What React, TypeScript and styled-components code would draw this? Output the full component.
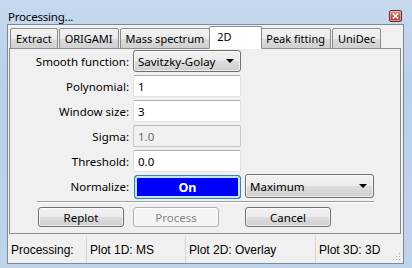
import styled, { createGlobalStyle } from "styled-components";

const GlobalStyle = createGlobalStyle`
  html, body {
    margin: 0;
    padding: 0;
    background: #bfd4eb;
  }
  * {
    box-sizing: border-box;
  }
`;

const uiFont = `"Noto Sans", "Open Sans", sans-serif`;

const Window = styled.div`
  width: 412px;
  height: 268px;
  display: flex;
  flex-direction: column;
  background: linear-gradient(#c6d9ee, #bad0e9 30%, #bfd4eb);
  font-family: ${uiFont};
  font-size: 11px;
  color: #000;
`;

const TitleBar = styled.div`
  height: 24px;
  padding: 8px 10px 0 8px;
  display: flex;
  align-items: center;
  justify-content: space-between;
`;

const Title = styled.span`
  font-size: 11.5px;
  letter-spacing: -0.2px;
`;

const CloseButton = styled.span`
  width: 13px;
  height: 12px;
  border: 1px solid #6b2a2a;
  border-radius: 2px;
  background: linear-gradient(#e39a8c, #c75050 50%, #b83c3c);
  box-shadow: inset 0 0 0 1px rgba(255, 220, 210, 0.5);
  display: flex;
  align-items: center;
  justify-content: center;
`;

const Client = styled.div`
  flex: 1;
  margin: 0 8px 4px 7px;
  border: 1px solid #7b8a9c;
  background: #f0f0f0;
  display: flex;
  flex-direction: column;
`;

const TabStrip = styled.div`
  height: 24px;
  padding: 1px 0 0 2px;
  display: flex;
  align-items: flex-end;
  position: relative;
  z-index: 1;
`;

const Tab = styled.div<{ $active?: boolean }>`
  height: ${({ $active }) => ($active ? "23px" : "21px")};
  margin: ${({ $active }) => ($active ? "0 -2px" : "0 1px 0 0")};
  min-width: ${({ $active }) => ($active ? "53px" : "0")};
  padding: ${({ $active }) => ($active ? "2px 7px 0" : "2px 5px 0")};
  border: 1px solid #898c95;
  border-bottom-color: ${({ $active }) => ($active ? "#fff" : "#898c95")};
  border-radius: 2px 2px 0 0;
  background: ${({ $active }) =>
    $active ? "#fff" : "linear-gradient(#f2f2f2, #ebebeb 50%, #dddddd 51%, #cfcfcf)"};
  position: relative;
  z-index: ${({ $active }) => ($active ? 2 : 1)};
  white-space: nowrap;
  line-height: 16px;
`;

const Panel = styled.div`
  height: 186px;
  margin: -1px 2px 0 1px;
  border: 1px solid #898c95;
  background: #f0f0f0;
  padding: 1px 0 0 0;
`;

const Form = styled.div`
  display: grid;
  grid-template-columns: 120px 108px 130px;
  grid-template-rows: repeat(6, 22px) 4px 20px;
  column-gap: 3px;
  row-gap: 3px;
  align-items: center;
  font-size: 11.5px;
`;

const Label = styled.span`
  justify-self: end;
  padding-right: 1px;
  white-space: nowrap;
`;

const Combo = styled.div<{ $height?: number }>`
  height: ${({ $height }) => $height ?? 22}px;
  border: 1px solid #707070;
  border-radius: 3px;
  background: linear-gradient(#f2f2f2, #ebebeb 50%, #dddddd 51%, #cfcfcf);
  box-shadow: inset 0 0 0 1px rgba(255, 255, 255, 0.6);
  display: flex;
  align-items: center;
  justify-content: space-between;
  padding: 0 6px 0 4px;
  white-space: nowrap;
  margin-left: ${({ $height }) => ($height ? "1px" : "0")};
`;

const Arrow = styled.span`
  width: 0;
  height: 0;
  border-left: 4px solid transparent;
  border-right: 4px solid transparent;
  border-top: 4px solid #000;
`;

const Field = styled.div<{ $disabled?: boolean }>`
  height: 22px;
  border: 1px solid ${({ $disabled }) => ($disabled ? "#c4c6ca" : "#dde0e5")};
  border-top-color: ${({ $disabled }) => ($disabled ? "#b5b8bd" : "#abadb3")};
  border-radius: 2px;
  background: ${({ $disabled }) => ($disabled ? "#f0f0f0" : "#fff")};
  color: ${({ $disabled }) => ($disabled ? "#6d6d6d" : "#000")};
  padding-left: 4px;
  display: flex;
  align-items: center;
`;

const Toggle = styled.div`
  height: 24px;
  margin: 1px 0 -1px 1px;
  border: 1px solid #3c7fb1;
  border-radius: 3px;
  background: #0000ff;
  box-shadow: inset 0 0 0 2px #c4e5f6;
  color: #fff;
  font-weight: 700;
  font-size: 12.5px;
  display: flex;
  align-items: center;
  justify-content: center;
`;

const Separator = styled.div`
  grid-column: 1 / -1;
  height: 2px;
  margin-left: 27px;
  border-top: 1px solid #a0a0a0;
  border-bottom: 1px solid #fff;
`;

const Button = styled.div<{ $disabled?: boolean; $offset?: number }>`
  width: 86px;
  height: 20px;
  justify-self: ${({ $offset }) => ($offset !== undefined ? "start" : "end")};
  margin-left: ${({ $offset }) => $offset ?? 0}px;
  margin-right: ${({ $offset }) => ($offset !== undefined ? 0 : 6)}px;
  border: 1px solid ${({ $disabled }) => ($disabled ? "#adb2b5" : "#707070")};
  border-radius: 3px;
  background: ${({ $disabled }) =>
    $disabled ? "#f4f4f4" : "linear-gradient(#f2f2f2, #ebebeb 50%, #dddddd 51%, #cfcfcf)"};
  box-shadow: inset 0 0 0 1px rgba(255, 255, 255, 0.6);
  color: ${({ $disabled }) => ($disabled ? "#838383" : "#000")};
  display: flex;
  align-items: center;
  justify-content: center;
`;

const StatusBar = styled.div`
  margin-top: 2px;
  flex: 1;
  display: flex;
  font-family: "Liberation Sans", Arial, sans-serif;
  font-size: 12px;
  position: relative;
`;

const StatusField = styled.div<{ $width?: number }>`
  width: ${({ $width }) => ($width ? `${$width}px` : "auto")};
  flex: ${({ $width }) => ($width ? "none" : "1")};
  padding: 0 0 0 3px;
  border-left: 1px solid #d7d7d7;
  display: flex;
  align-items: center;
  white-space: nowrap;
  &:first-child {
    border-left: none;
  }
`;

const Grip = styled.svg`
  position: absolute;
  right: 2px;
  bottom: 2px;
`;

export default function App() {
  return (
    <>
      <GlobalStyle />
      <Window>
        <TitleBar>
          <Title>Processing...</Title>
          <CloseButton>
            <svg width="7" height="6" viewBox="0 0 7 6">
              <path d="M0.8 0.5 L6.2 5.5 M6.2 0.5 L0.8 5.5" stroke="#fff" strokeWidth="1.6" />
            </svg>
          </CloseButton>
        </TitleBar>
        <Client>
          <TabStrip>
            <Tab>Extract</Tab>
            <Tab>ORIGAMI</Tab>
            <Tab>Mass spectrum</Tab>
            <Tab $active>2D</Tab>
            <Tab>Peak fitting</Tab>
            <Tab>UniDec</Tab>
          </TabStrip>
          <Panel>
            <Form>
              <Label>Smooth function:</Label>
              <Combo>
                Savitzky-Golay
                <Arrow />
              </Combo>
              <span />
              <Label>Polynomial:</Label>
              <Field>1</Field>
              <span />
              <Label>Window size:</Label>
              <Field>3</Field>
              <span />
              <Label>Sigma:</Label>
              <Field $disabled>1.0</Field>
              <span />
              <Label>Threshold:</Label>
              <Field>0.0</Field>
              <span />
              <Label>Normalize:</Label>
              <Toggle>On</Toggle>
              <Combo $height={24}>
                Maximum
                <Arrow />
              </Combo>
              <Separator />
              <Button>Replot</Button>
              <Button $disabled $offset={0}>
                Process
              </Button>
              <Button $offset={1}>Cancel</Button>
            </Form>
          </Panel>
          <StatusBar>
            <StatusField $width={78}>Processing:</StatusField>
            <StatusField $width={99}>Plot 1D: MS</StatusField>
            <StatusField $width={130}>Plot 2D: Overlay</StatusField>
            <StatusField>Plot 3D: 3D</StatusField>
            <Grip width="8" height="8" viewBox="0 0 8 8">
              <rect x="6" y="0" width="1" height="1" fill="#b0b0b0" />
              <rect x="3" y="3" width="1" height="1" fill="#b0b0b0" />
              <rect x="6" y="3" width="1" height="1" fill="#b0b0b0" />
              <rect x="0" y="6" width="1" height="1" fill="#b0b0b0" />
              <rect x="3" y="6" width="1" height="1" fill="#b0b0b0" />
              <rect x="6" y="6" width="1" height="1" fill="#b0b0b0" />
            </Grip>
          </StatusBar>
        </Client>
      </Window>
    </>
  );
}
